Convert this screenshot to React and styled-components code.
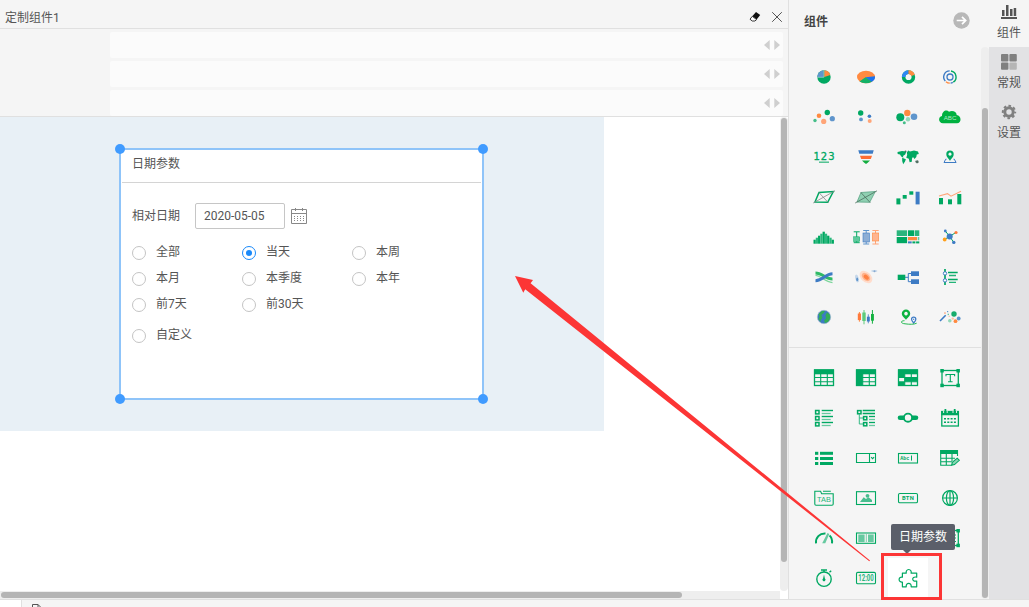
import React from "react";
import styled, { createGlobalStyle } from 'styled-components'

const GREEN = '#00a862'
const LIGHT = '#66c9a0'
const BLUE = '#3d7bc4'
const SKY = '#5f95cc'
const ORANGE = '#ff8a40'
const PEACH = '#ffa578'

const GlobalStyle = createGlobalStyle`
    * { box-sizing: border-box; }
    body {
        margin: 0;
        overflow: hidden;
        font-family: Roboto, 'Noto Sans CJK SC', sans-serif;
        font-size: 12px;
        color: #555;
    }
    svg { display: block; }
`

const Page = styled.div`
    position: relative;
    display: flex;
    flex-direction: column;
    width: 1029px;
    height: 607px;
    overflow: hidden;
    background-color: #f5f5f5;
`

const Main = styled.div`
    display: flex;
    height: 599px;
`

const Editor = styled.div`
    display: flex;
    flex-direction: column;
    width: 788px;
`

const EditorHeader = styled.div`
    display: flex;
    align-items: center;
    height: 29px;
    padding: 6px 5px 0 5px;
    border-bottom: 1px solid #e0e0e0;
`

const EditorTitle = styled.div`
    flex: 1;
    padding-top: 2px;
    line-height: 18px;
    color: #555;
`

const HeaderTools = styled.div`
    display: flex;
    align-items: center;
    gap: 10px;
`

const Shelves = styled.div`
    display: flex;
    flex-direction: column;
    gap: 3px;
    height: 88px;
    padding: 3px 5px 0 110px;
    border-bottom: 1px solid #e0e0e0;
`

const Shelf = styled.div`
    display: flex;
    align-items: center;
    justify-content: flex-end;
    height: 26px;
    padding-right: 2px;
    border-radius: 2px;
    background-color: #fbfbfb;
`

const Workspace = styled.div`
    display: flex;
    height: 474px;
    background-color: #fff;
`

const CanvasArea = styled.div`
    width: 780px;
`

const Canvas = styled.div`
    position: relative;
    width: 604px;
    height: 314px;
    background-color: #e8f0f6;
`

const VTrack = styled.div`
    width: 8px;
    height: ${p => p.$height}px;
    margin-top: ${p => p.$top || 0}px;
    padding: ${p => p.$offset}px 1px 0 1px;
    border-radius: 4px;
    background-color: #eeeeee;
`

const VThumb = styled.div`
    width: 6px;
    height: ${p => p.$height}px;
    border-radius: 3px;
    background-color: #b5b5b5;
`

const HTrack = styled.div`
    flex: 1;
    padding-left: 1px;
    background: linear-gradient(to right, #eeeeee 780px, #fff 780px);
`

const HThumb = styled.div`
    width: 681px;
    height: 6px;
    margin-top: 1px;
    border-radius: 3px;
    background-color: #b5b5b5;
`

const Widget = styled.div`
    position: absolute;
    left: 119px;
    top: 31px;
    width: 365px;
    height: 252px;
    padding: 1px;
    border: 2px solid #8fc4f9;
    background-color: #fff;
`

const WidgetTitle = styled.div`
    height: 32px;
    padding: 4px 0 0 10px;
    line-height: 18px;
    border-bottom: 1px solid #d4d4d4;
`

const WidgetBody = styled.div`
    padding: 20px 0 0 10px;
`

const Handle = styled.div`
    position: absolute;
    width: 10px;
    height: 10px;
    border-radius: 50%;
    background-color: #409bff;
    ${p => p.$right ? 'right: -6px;' : 'left: -6px;'}
    ${p => p.$bottom ? 'bottom: -6px;' : 'top: -6px;'}
`

const DateRow = styled.div`
    display: flex;
    align-items: center;
`

const DateLabel = styled.div`
    width: 63px;
    line-height: 18px;
`

const DateInput = styled.div`
    width: 90px;
    height: 26px;
    margin-right: 6px;
    padding-left: 8px;
    line-height: 24px;
    border: 1px solid #c6c6c6;
    border-radius: 2px;
`

const Options = styled.div`
    display: grid;
    grid-template-columns: repeat(3, 110px);
    grid-auto-rows: 26px;
    margin-top: 11px;
`

const Option = styled.div`
    display: flex;
    align-items: center;
    height: 26px;
    margin-top: ${p => p.$last ? 5 : 0}px;
`

const Radio = styled.div`
    display: flex;
    align-items: center;
    justify-content: center;
    width: 14px;
    height: 14px;
    margin-right: 10px;
    border: 1px solid ${p => p.$checked ? '#1989fa' : '#c4c4c4'};
    border-radius: 50%;

    &::after {
        content: '';
        width: 6px;
        height: 6px;
        border-radius: 50%;
        background-color: ${p => p.$checked ? '#1989fa' : 'transparent'};
    }
`

const OptionText = styled.div`
    padding-bottom: 2px;
    line-height: 18px;
`

const Palette = styled.div`
    width: 193px;
    border-left: 1px solid #e0e0e0;
`

const PaletteHeader = styled.div`
    display: flex;
    align-items: center;
    justify-content: space-between;
    height: 57px;
    padding: 0 11px 17px 15px;
`

const PaletteTitle = styled.div`
    font-weight: 700;
    color: #444;
`

const Icons = styled.div`
    display: grid;
    grid-template-columns: repeat(4, 42px);
    grid-auto-rows: 40px;
    padding-left: 14px;
`

const Divider = styled.div`
    height: 1px;
    margin: 10px 0;
    background-color: #e0e0e0;
`

const IconCell = styled.div`
    display: flex;
    justify-content: center;
    width: 40px;
    height: 40px;
    margin-left: 1px;
    background-color: ${p => p.$active ? '#fff' : 'transparent'};
`

const SideTabs = styled.div`
    width: 40px;
    background-color: #e2e2e4;
`

const SideTab = styled.div`
    display: flex;
    flex-direction: column;
    align-items: center;
    gap: 4px;
    height: ${p => p.$active ? 47 : 50}px;
    padding-top: ${p => p.$active ? 4 : 7}px;
    line-height: 18px;
    color: #555;
    background-color: ${p => p.$active ? '#f5f5f5' : 'transparent'};
`

const BottomBar = styled.div`
    display: flex;
    height: 8px;
    border-top: 1px solid #e0e0e0;
`

const BottomTab = styled.div`
    width: 22px;
    margin-right: 10px;
    border-right: 1px solid #e0e0e0;
    background-color: #fff;
`

const SheetIcon = styled.div`
    padding-top: 4px;
`

const Tooltip = styled.div`
    position: absolute;
    left: 891px;
    top: 524px;
    width: 64px;
    height: 26px;
    border-radius: 2px;
    line-height: 27px;
    text-align: center;
    color: #fff;
    background-color: #5b5f6a;

    &::after {
        content: '';
        position: absolute;
        left: 12px;
        top: 26px;
        border: 4px solid transparent;
        border-top-color: #5b5f6a;
        border-bottom: 0;
    }
`

const Highlight = styled.div`
    position: absolute;
    left: 881px;
    top: 553px;
    width: 61px;
    height: 47px;
    border: 3px solid #fc3535;
`

const ArrowLayer = styled.svg`
    position: absolute;
    left: 0;
    top: 0;
    pointer-events: none;
`

// every palette glyph is drawn round its own centre
const Glyph = ({ children }) => (
    <svg width="40" height="40" viewBox="-20 -20 40 40" fill="none" stroke="none">{children}</svg>
)

const Dots = ({ items }) => items.map(([x, y, r, c]) => <circle key={`${x},${y}`} cx={x} cy={y} r={r} fill={c} />)

const Boxes = ({ items, fill = GREEN }) => items.map(([x, y, w, h, c]) => (
    <rect key={`${x},${y}`} x={x} y={y} width={w} height={h} fill={c || fill} />
))

const Radar = ({ filled }) => (
    <g strokeWidth="1">
        <path d="M-9 5 L-5 -4.5 L9.3 -5.5 L3.7 5.3 Z" fill={filled ? '#8fd0b2' : 'none'} stroke={filled ? '#5aa585' : GREEN} strokeWidth={filled ? 0.8 : 1.5} />
        <path d="M-10.8 6 L11 -6.2 M-5.3 -4.7 L4.3 5.7" stroke={filled ? '#4c6e5e' : '#888'} strokeWidth="0.8" />
    </g>
)

const TableBase = ({ children }) => (
    <g>
        <rect x="-9.5" y="-8" width="19" height="15.5" stroke={GREEN} strokeWidth="1.3" />
        <rect x="-10" y="-8.7" width="20" height="5" fill={GREEN} />
        <path d="M-3.3 -4 V7.5 M3.3 -4 V7.5 M-9.5 -.5 H9.5 M-9.5 3.7 H9.5" stroke={GREEN} strokeWidth="1.1" />
        {children}
    </g>
)

const Frame = ({ children }) => (
    <g>
        <rect x="-8" y="-7.5" width="16.3" height="15" stroke={GREEN} strokeWidth="1.3" />
        <Boxes items={[[-9.7, -9, 3.5, 3.5], [6.4, -9, 3.5, 3.5], [-9.7, 5.7, 3.5, 3.5], [6.4, 5.7, 3.5, 3.5]]} />
        {children}
    </g>
)

const chartIcons = [
    <g>
        <circle r="6.7" fill={GREEN} />
        <path d="M-.4 .3 V-6.7 A6.7 6.7 0 0 0 -6.7 .3 Z" fill={SKY} />
        <path d="M.3 0 V-6.7 A6.7 6.7 0 0 1 6.3 -2 Z" fill={ORANGE} />
        <path d="M-.1 -6.7 V.3 H-6.7" stroke="#dcebe4" strokeWidth=".5" />
    </g>,
    <g>
        <ellipse rx="9" ry="6.3" fill={ORANGE} />
        <path d="M-.5 .3 L9 -.7 A9 6.3 0 0 1 5 5.2 Z" fill="#1a73f0" />
        <path d="M-.5 .2 L5.7 4.7 A9 6.3 0 0 1 -6.5 4.5 Z" fill="#13b267" />
    </g>,
    <g strokeWidth="3.6">
        <circle cx=".5" r="4.9" stroke={GREEN} />
        <path d="M-4.4 0 A4.9 4.9 0 0 1 .5 -4.9" stroke="#2d87f5" />
        <path d="M.5 -4.9 A4.9 4.9 0 0 1 5.1 -1.6" stroke={ORANGE} />
    </g>,
    <g strokeWidth="1.4">
        <path d="M1 -6 A6.1 6.1 0 0 1 3.3 5.1" stroke={GREEN} />
        <path d="M-.3 -6.1 A6.1 6.1 0 0 0 -4.7 4.1" stroke={BLUE} />
        <path d="M-4 4.7 A6.1 6.1 0 0 0 -.2 6.1" stroke={ORANGE} />
        <path d="M.6 6.1 A6.1 6.1 0 0 0 2.8 5.4" stroke={BLUE} />
        <circle r="3" stroke={BLUE} strokeWidth="1.3" />
    </g>,
    <Dots items={[[-9, 3.5, 1.7, '#45be89'], [-5, -1.3, 2.3, ORANGE], [3.3, -4.5, 2.7, GREEN], [-.3, 4.4, 2.6, PEACH], [8.3, 1.7, 2.6, SKY]]} />,
    <Dots items={[[-5.3, -4, 2.7, GREEN], [-5, 2.4, 1.9, SKY], [3.4, -.7, 1.8, BLUE], [3.7, 4, 2, PEACH]]} />,
    <Dots items={[[-7.7, .3, 4, GREEN], [-.7, -4, 3.2, ORANGE], [6, -.3, 3.3, SKY], [0, 2.3, 2.2, '#93d9b9'], [-3.7, 5.7, 1.5, '#45be89']]} />,
    <g>
        <path d="M-7 6.3 C-12 6 -12 -.5 -8 -1 C-8 -6 -3.5 -7.8 -1 -5.3 C2 -6.8 6.6 -5.8 6.7 -2 C11.5 -1.5 12 6 7 6.3 Z" fill="#00b140" />
        <text y="3.3" textAnchor="middle" fontSize="6.2" fontFamily="Liberation Sans, sans-serif" fill="#b4e7c5">ABC</text>
    </g>,
    <g>
        <text x=".5" y="2.5" textAnchor="middle" fontSize="10" letterSpacing="1" fontFamily="DejaVu Sans, sans-serif" fill={GREEN} stroke={GREEN} strokeWidth=".3">123</text>
        <path d="M-5 5.2 H5" stroke="#45be89" strokeWidth="1.4" />
    </g>,
    <g>
        <path d="M-7.7 -6.7 H7.7 L6.7 -3.3 H-6.7 Z" fill={BLUE} />
        <path d="M-6 -1.3 H6 L4.8 2 H-4.8 Z" fill="#ff6d33" />
        <path d="M-4 3.4 H4 L1.7 5.8 L0 7 L-1.7 5.8 Z" fill="#12ad3f" />
    </g>,
    <g fill={GREEN}>
        <path d="M-10.5 -5 L-6 -6 L-1.6 -5.4 L-2.8 -2.4 L-5 -1 L-4.6 .7 L-6.8 -.4 L-8 -2.6 L-10.3 -3 Z" />
        <path d="M-5.8 .8 L-2.1 2.2 L-3 4.4 L-4.8 7.2 L-5.8 4 Z" />
        <path d="M-1.2 -4.6 L.3 -6.6 L2 -5.4 L6 -6.4 L10 -5.4 L10.8 -3 L8.8 -2.4 L8.3 0 L6.5 2 L5 0 L4 1.4 L3.8 4.8 L1.6 5.2 L.8 1.8 L-1.7 .8 L-.8 -2.2 Z" />
        <path d="M7.5 3.7 L10 3.2 L10.9 5.2 L9 6.4 L7.3 5 Z" fill="#4f6d61" />
        <circle cx="-2.5" cy="-5.7" r=".9" fill="#4f6d61" />
    </g>,
    <g>
        <path d="M-3.5 2.2 H-4.3 L-6 5.5 H6.1 L4.3 2.2 H3.5" stroke={BLUE} strokeWidth="1" />
        <path d="M0 4 C-1.2 1.8 -3.7 .4 -3.7 -2.9 A3.7 3.7 0 0 1 3.7 -2.9 C3.7 .4 1.2 1.8 0 4 Z M0 -4.4 A1.6 1.6 0 1 0 .01 -4.4 Z" fill={GREEN} fillRule="evenodd" />
    </g>,
    <Radar />,
    <Radar filled />,
    <Boxes items={[[-11.6, 1.4, 4, 6], [-5.3, -2, 4, 3.7], [1.3, -5.7, 4, 3.4], [7.6, -5.3, 4, 12.7, BLUE]]} />,
    <g>
        <Boxes items={[[-11, 1, 4, 6.3], [-2, 2.3, 4, 5], [7.3, -3, 4, 10.3]]} />
        <path d="M-11 -1 L-2.5 -3.4 L1 -.8 L11 -5.8" stroke={PEACH} strokeWidth="1.1" />
    </g>,
    <g>
        {[4, 6, 8, 10, 12, 10, 8, 6, 4].map((h, i) => (
            <rect key={i} x={-10.5 + i * 2.27} y={6.7 - h} width="2.27" height={h} fill={i % 2 ? '#2cb87e' : GREEN} />
        ))}
    </g>,
    <g>
        <path d="M-12.3 -5.2 H-6.3 M-12.3 5.7 H-6.3 M-9.3 -5 V5.5" stroke={GREEN} strokeWidth="1" />
        <rect x="-12.3" y="-.2" width="6" height="4.7" fill="#5fc99d" stroke={GREEN} strokeWidth=".5" />
        <path d="M-2.8 -6.5 H3.2 M-2.8 7 H3.2 M.2 -6.5 V7" stroke={SKY} strokeWidth="1" />
        <rect x="-3" y="-4" width="6.4" height="9" fill="#8daed5" stroke={BLUE} strokeWidth=".6" />
        <path d="M6.4 -6.5 H12.7 M6.4 7 H12.7 M9.5 -6.5 V7" stroke={PEACH} strokeWidth="1" />
        <rect x="6.3" y="-4" width="6.4" height="8" fill="#ffb48e" stroke={ORANGE} strokeWidth=".6" />
    </g>,
    <Boxes items={[[-11.3, -6.7, 10.4, 5.7, '#2ab57c'], [-11.3, 0, 10.4, 6.2], [0, -6.7, 6.3, 5.7], [7, -6.7, 4.3, 5.7, '#2ab57c'], [0, 0, 9, 3.3, ORANGE], [9.7, 0, 1.6, 3.3, LIGHT], [0, 4.4, 3.7, 2, BLUE], [4.4, 4.4, 3, 2], [8.1, 4.4, 3.2, 2]]} />,
    <g>
        <path d="M-.3 -.5 L-4.7 -6 M-.3 -.5 L6 -4.7 M-.3 -.5 L-5.3 2.3 M-.3 -.5 L3.7 5.3" stroke={GREEN} strokeWidth="1" />
        <Dots items={[[-.3, -.5, 3, BLUE], [-4.7, -6, 1.4, BLUE], [6, -4.5, 1.6, '#ff7a3c'], [-5.3, 2.5, 1.9, '#ff9f1a'], [3.8, 5.4, 1.7, BLUE]]} />
    </g>,
    <g>
        <path d="M-8.5 -1.6 C-3 -1.2 1 5 8.5 5.6" stroke="#7cd69b" strokeWidth="1.1" />
        <path d="M-8.5 -4 C-2 -4 2 2.2 8.5 2" stroke="#2fba65" strokeWidth="3" />
        <path d="M-8.5 3.7 C-1 3.7 1 -3 8.5 -3.2" stroke={BLUE} strokeWidth="3" />
    </g>,
    <g>
        <ellipse rx="7.3" ry="5" transform="rotate(42)" fill="#ffdccb" />
        <ellipse rx="5" ry="3.3" transform="rotate(42)" fill="#ffb28b" />
        <ellipse rx="3" ry="1.9" cx=".3" transform="rotate(42)" fill="#ff8042" />
        <ellipse cx="-9" cy="1.5" rx="1.7" ry="4" transform="rotate(-15 -9 1.5)" fill="#c7d8ea" />
        <ellipse cx="-8.8" cy="2.3" rx="1" ry="1.9" fill={SKY} />
        <ellipse cx="8.3" cy="-6" rx="3.2" ry="1" fill="#c7d8ea" /><circle cx="8.5" cy="-5.7" r="1" fill="#88a9d0" />
    </g>,
    <g>
        <path d="M-3 .3 H.3 M3 -3.5 H.3 V4.7 H3" stroke={BLUE} strokeWidth="1" />
        <Boxes items={[[-10.3, -2.3, 7.6, 5.3], [3, -5.7, 8, 4.7, BLUE], [3, 2.3, 8, 4.7, BLUE]]} />
    </g>,
    <g>
        <path d="M-5 -8 V8" stroke={GREEN} strokeWidth="1.7" />
        <circle cx="-5" cy="-3.6" r="1.7" fill="#fff" stroke={BLUE} /><circle cx="-5" cy="3.4" r="1.7" fill="#fff" stroke={BLUE} />
        <path d="M-2 -4.5 H7.7 M-2 2.5 H7.7" stroke={GREEN} strokeWidth="1.4" />
        <path d="M-1 -1.5 H6 M-1 5.4 H6" stroke="#22b477" strokeWidth="1.4" />
    </g>,
    <g>
        <circle r="6.7" fill={BLUE} />
        <path d="M-5.5 -3 L-2 -6.2 L1 -6 L-.6 -3.5 L-2.6 -2 L-1.5 .7 L-3.2 3 L-3.4 5 L-5.7 2 L-4.6 -.3 Z M3 -4.8 L6 -2.3 L6.4 1 L4.3 4.7 L.8 6.3 L.2 3 L2.1 1.6 L1.4 -1.5 Z" fill="#34ae57" />
        <circle r="6.7" stroke="#a7bfce" strokeWidth=".6" />
    </g>,
    <g strokeWidth="1">
        <path d="M-6.6 -5 V4.7" stroke={ORANGE} /><path d="M-2 -7 V7.3" stroke="#5ecb7b" /><path d="M2.3 -2.7 V6.3" stroke={SKY} /><path d="M6.4 -7 V6.7" stroke="#12b13f" />
        <Boxes items={[[-8.2, -3.5, 3.2, 6.6, '#ff7a3c'], [-3.7, -4.5, 3.4, 8.5, '#5ecb7b'], [.9, -.3, 2.9, 4.8, BLUE], [5, -3, 2.9, 6.7, '#12b13f']]} />
    </g>,
    <g>
        <path d="M-2 3 C-3.2 .8 -6.2 -.4 -6.2 -3.4 A4.2 4.2 0 0 1 2.2 -3.4 C2.2 -.4 -.8 .8 -2 3 Z M-2 -5.2 A1.8 1.8 0 1 0 -1.99 -5.2 Z" fill="#0cb240" fillRule="evenodd" />
        <path d="M5.7 6 C4.7 4.3 3.6 3.8 3.6 2.2 A2.1 2.1 0 0 1 7.8 2.2 C7.8 3.8 6.7 4.3 5.7 6 Z" fill="#fff" stroke={BLUE} strokeWidth="1.3" /><circle cx="5.7" cy="2.2" r=".7" fill={BLUE} />
        <path d="M-3.5 3.7 C-8 3.8 -7.3 6.5 -3 6.8 C1.5 7.5 6 7.5 8.7 6.2" stroke="#0cb240" strokeWidth=".9" />
    </g>,
    <g>
        <path d="M-10 4 L-4.3 -1.7" stroke={BLUE} strokeWidth="1.6" />
        <Boxes items={[[-5.8, -4.7, 1.5, 1.5, PEACH], [-3, -6, 1.2, 1.2, SKY], [-2.4, -3.3, 1.4, 1.4, LIGHT], [-1.3, -1.2, 1, 1, PEACH]]} />
        <Dots items={[[4, -3, 2.7, '#18ac6d'], [8.7, 1.5, 1.9, SKY], [5.5, 4.2, 1.9, ORANGE], [-.2, 3.7, 1.8, '#93d9b9'], [2.8, 1.6, 1.2, '#ffc3a4']]} />
    </g>,
]

const controlIcons = [
    <TableBase />,
    <TableBase><rect x="-10" y="-4" width="6.5" height="12" fill={GREEN} /></TableBase>,
    <TableBase><Boxes items={[[-10, -4, 6.5, 3.4], [-3.3, -.4, 13, 4], [-10, 4, 6.5, 4]]} /></TableBase>,
    <Frame><path d="M-4 -1.8 V-3.5 H4.6 V-1.8 M.3 -3.8 V3.8 M-2 3.8 H2.6" stroke={GREEN} strokeWidth="1.1" /></Frame>,
    <g>
        {[-6, 0, 6].map(y => (
            <g key={y}>
                <rect x="-8.4" y={y - 1.5} width="3.4" height="3.4" stroke={GREEN} strokeWidth="1.5" />
                <path d={`M-2.3 ${y - 1.5} H9`} stroke={GREEN} strokeWidth="1.4" />
                <path d={`M-2.3 ${y + 1.5} H6.7`} stroke={LIGHT} strokeWidth="1.3" />
            </g>
        ))}
    </g>,
    <g>
        <rect x="-8.4" y="-7.4" width="3.4" height="3.2" stroke={GREEN} strokeWidth="1.5" />
        <path d="M-6.7 -4 V6 H-3 M-6.7 0 H-3" stroke="#35b985" />
        <path d="M-3.3 -7.5 H9 M-3.3 -4.5 H9" stroke={GREEN} strokeWidth="1.4" />
        {[0, 6].map(y => (
            <g key={y}>
                <rect x="-2.4" y={y - 1.4} width="3.2" height="3.2" stroke={GREEN} strokeWidth="1.5" />
                <path d={`M3 ${y - 1.5} H9`} stroke={GREEN} strokeWidth="1.3" /><path d={`M3 ${y + 1.5} H9`} stroke={LIGHT} strokeWidth="1.3" />
            </g>
        ))}
    </g>,
    <g>
        <path d="M-8 -.3 H8" stroke={GREEN} strokeWidth="4.6" strokeLinecap="round" />
        <circle cy="-.3" r="4.1" fill="#f5f5f5" stroke={GREEN} strokeWidth="1.9" />
    </g>,
    <g>
        <rect x="-8.2" y="-6.5" width="16.6" height="14.5" stroke={GREEN} strokeWidth="1.3" />
        <path d="M-8.8 -7 H9 V-2.7 H-8.8 Z M-5.5 -9 H-3.7 V-5 H-5.5 Z M3.8 -9 H5.6 V-5 H3.8 Z" fill={GREEN} />
        <path d="M-6.4 -7 V-5 M-2.8 -7 V-5 M3 -7 V-5 M6.5 -7 V-5" stroke="#f5f5f5" strokeWidth=".9" />
        <path d="M-6 .8 H6.5 M-6 4.3 H6.5" stroke={GREEN} strokeWidth="1.5" strokeDasharray="2 1.3" />
    </g>,
    <Boxes items={[[-9, -6.2, 3.3, 3], [-4, -6.2, 13, 3], [-9, -1, 3.3, 3], [-4, -1, 13, 3], [-9, 4, 3.3, 3], [-4, 4, 13, 3]]} />,
    <path d="M-9.5 -4.5 H9.5 V4.5 H-9.5 Z M3.5 -4.5 V4.5 M5.1 -.8 L6.6 .7 L8.1 -.8" stroke={GREEN} strokeWidth="1.1" />,
    <g>
        <rect x="-9.5" y="-4.5" width="19" height="9.5" stroke={GREEN} strokeWidth="1.1" />
        <text x="-7.7" y="2.4" fontSize="6.2" fontWeight="700" textLength="9" lengthAdjust="spacingAndGlyphs" fontFamily="Liberation Mono, monospace" fill={GREEN}>Abc</text>
        <path d="M3.5 -2.5 V2.6" stroke={GREEN} />
    </g>,
    <g>
        <path d="M7.5 -2 V-7.5 H-9.3 V7.3 H1.5 M-9.3 .2 H5 M-9.3 3.7 H2 M-3.7 -4 V7.3 M2 -4 V3" stroke={GREEN} strokeWidth="1.1" />
        <rect x="-9.8" y="-8" width="17.8" height="4" fill={GREEN} />
        <path d="M1.6 7.3 L2.3 4.3 L7.2 .2 L9.3 2.3 L4.5 6.6 Z" fill="#8bd5b4" stroke={GREEN} strokeWidth="1.1" />
    </g>,
    <g>
        <path d="M-9.2 6 V-6.8 H-3.4 L-2.4 -4.3 H9.2 V6 Q9.2 7.2 8 7.2 H-8 Q-9.2 7.2 -9.2 6 Z M-1 -6.8 H6.8" stroke={GREEN} strokeWidth="1.1" />
        <text y="4.2" textAnchor="middle" fontSize="7.4" fontFamily="Liberation Sans, sans-serif" fill="#28b57d">TAB</text>
    </g>,
    <g>
        <rect x="-9.5" y="-6.3" width="19" height="12.8" stroke={GREEN} strokeWidth="1.1" />
        <path d="M-6 4 L-2.3 -.7 L0 1 L2.5 -.7 L6 2 V4 Z" fill="#48be8f" /><circle cx="1.5" cy="-2.2" r="1.9" fill="#48be8f" />
    </g>,
    <g>
        <rect x="-9.5" y="-4.5" width="19" height="9.2" rx="1.3" stroke={GREEN} strokeWidth="1.1" />
        <text y="2.2" textAnchor="middle" fontSize="5.8" fontWeight="700" letterSpacing=".2" fontFamily="Roboto, sans-serif" fill={GREEN}>BTN</text>
    </g>,
    <g stroke={GREEN} strokeWidth="1.2">
        <circle r="7.4" /><ellipse rx="3.6" ry="7.4" /><path d="M-7.4 0 H7.4 M0 -7.4 V7.4" />
    </g>,
    <g>
        <path d="M-8 5.3 C-8.5 -.5 -4.5 -4.7 1.5 -4.4 M5.5 -2.6 C7.8 -.6 8.4 2 8 5.3" stroke={GREEN} strokeWidth="2" />
        <path d="M-1.8 5.3 L3.5 -5 L5.3 -4 L1.3 5.3 Z" fill={LIGHT} />
    </g>,
    <g>
        <rect x="-9.5" y="-5" width="19" height="10.3" stroke={GREEN} strokeWidth="1.1" />
        <Boxes fill={LIGHT} items={[[-7.7, -3.5, 6.3, 7.5], [2, -3.5, 5.7, 7.5]]} />
        <path d="M.3 -3.5 V4" stroke={GREEN} strokeDasharray="1 1" />
    </g>,
    <rect x="-9.5" y="-6" width="19" height="12" stroke={GREEN} strokeWidth="1" />,
    <Frame><path d="M-5 -3 H6 M-5 0 H6 M-5 3.5 H6" stroke={GREEN} strokeWidth="1" /></Frame>,
    <g>
        <circle cy="1.2" r="7.2" stroke={GREEN} strokeWidth="1.4" />
        <path d="M-3 -8 H3 M0 -8 V-6 M5.5 -5.7 L7.2 -7.3" stroke={GREEN} strokeWidth="1.4" />
        <path d="M0 -3.5 L.9 .5 A1.5 1.5 0 1 1 -.9 .5 Z" fill={GREEN} />
    </g>,
    <g>
        <rect x="-9.5" y="-5.6" width="19" height="11.4" rx="1.3" stroke={GREEN} strokeWidth="1.1" />
        <text y="3" textAnchor="middle" fontSize="8.2" fontWeight="700" textLength="15.4" lengthAdjust="spacingAndGlyphs" fontFamily="Roboto, sans-serif" fill="#28b57d">12:00</text>
    </g>,
    <path d="M-5.6 -4.9 H-1.7 C-2.2 -6.3 -1.4 -8.5 .7 -8.5 C2.8 -8.5 3.6 -6.3 3.1 -4.9 H8.7 V-.8 C5.7 -1.6 4.7 .1 4.7 1 C4.7 2.2 5.8 3.8 8.7 3 V8.8 H3.2 C3.4 6.5 2.1 5.4 .7 5.4 C-.7 5.4 -2 6.5 -1.8 8.8 H-5.6 V4.1 C-7.3 4.4 -8.9 3.3 -8.9 1.5 C-8.9 -.3 -7.3 -1.2 -5.6 -.9 Z" stroke={GREEN} strokeWidth="1.2" strokeLinejoin="round" />,
]

const options = ['全部', '当天', '本周', '本月', '本季度', '本年', '前7天', '前30天']

const RadioOption = ({ label, checked, last }) => (
    <Option $last={last}>
        <Radio $checked={checked} />
        <OptionText>{label}</OptionText>
    </Option>
)

const DateWidget = () => (
    <Widget>
        <WidgetTitle>日期参数</WidgetTitle>
        <WidgetBody>
            <DateRow>
                <DateLabel>相对日期</DateLabel>
                <DateInput>2020-05-05</DateInput>
                <svg width="16" height="16" viewBox="0 0 16 16" fill="none" stroke="#888">
                    <path d="M.5 1.5 H15.5 V15.5 H.5 Z M.5 5.5 H15.5 M4.5 0 V3 M11.5 0 V3" />
                    <path d="M3 8.5 H14 M3 10.5 H14 M3 12.5 H14" strokeDasharray="1 2" />
                </svg>
            </DateRow>
            <Options>
                {options.map(label => <RadioOption key={label} label={label} checked={label === '当天'} />)}
            </Options>
            <RadioOption label="自定义" last />
        </WidgetBody>
        <Handle />
        <Handle $right />
        <Handle $bottom />
        <Handle $right $bottom />
    </Widget>
)

const App = () => {
    return (
        <Page>
            <GlobalStyle />
            <Main>
                <Editor>
                    <EditorHeader>
                        <EditorTitle>定制组件1</EditorTitle>
                        <HeaderTools>
                            <svg width="12" height="12" viewBox="0 0 12 12">
                                <path d="M7 1 L11.2 4 L7.6 8.6 L3.3 5.3 Z" fill="#111" />
                                <path d="M3.3 5.3 L7.6 8.6 L5.9 10 H3.2 L1 8.2 Z" fill="#fff" stroke="#222" strokeWidth=".9" />
                            </svg>
                            <svg width="12" height="12" viewBox="0 0 12 12" stroke="#555" strokeWidth="1">
                                <path d="M1.2 1.2 L10.8 10.8 M10.8 1.2 L1.2 10.8" />
                            </svg>
                        </HeaderTools>
                    </EditorHeader>
                    <Shelves>
                        {[0, 1, 2].map(i => (
                            <Shelf key={i}>
                                <svg width="18" height="10" viewBox="0 0 18 10" fill="#cfcfcf">
                                    <path d="M6.7 0 V10 L1 5 Z M11.3 0 V10 L17 5 Z" />
                                </svg>
                            </Shelf>
                        ))}
                    </Shelves>
                    <Workspace>
                        <CanvasArea>
                            <Canvas>
                                <DateWidget />
                            </Canvas>
                        </CanvasArea>
                        <VTrack $height={474} $offset={1}><VThumb $height={444} /></VTrack>
                    </Workspace>
                    <HTrack><HThumb /></HTrack>
                </Editor>
                <Palette>
                    <PaletteHeader>
                        <PaletteTitle>组件</PaletteTitle>
                        <svg width="17" height="17" viewBox="0 0 17 17">
                            <circle cx="8.5" cy="8.5" r="8.2" fill="#b8b8b8" />
                            <path d="M3.7 8.5 H12.5 M9 4.8 L12.7 8.5 L9 12.2" fill="none" stroke="#fff" strokeWidth="1.7" />
                        </svg>
                    </PaletteHeader>
                    <Icons>
                        {chartIcons.map((icon, i) => <IconCell key={i}><Glyph>{icon}</Glyph></IconCell>)}
                    </Icons>
                    <Divider />
                    <Icons>
                        {controlIcons.map((icon, i) => (
                            <IconCell key={i} $active={i === controlIcons.length - 1}><Glyph>{icon}</Glyph></IconCell>
                        ))}
                    </Icons>
                </Palette>
                <VTrack $height={552} $top={47} $offset={61}><VThumb $height={490} /></VTrack>
                <SideTabs>
                    <SideTab $active>
                        <svg width="16" height="16" viewBox="0 0 16 16" fill="#555">
                            <path d="M0 13 H16 V15 H0 Z M1 6 H3.5 V12 H1 Z M5 1 H7.5 V12 H5 Z M9 5 H11.5 V12 H9 Z M12.7 4 H15.2 V12 H12.7 Z" />
                        </svg>
                        组件
                    </SideTab>
                    <SideTab>
                        <svg width="16" height="16" viewBox="0 0 16 16" fill="#808080">
                            <rect width="7.4" height="7.4" rx="1" /><rect x="8.4" width="7.4" height="7.4" rx="1" />
                            <rect y="8.4" width="7.4" height="7.4" rx="1" /><rect x="8.4" y="8.4" width="7.4" height="7.4" rx="1" fill="#b5b5b5" />
                        </svg>
                        常规
                    </SideTab>
                    <SideTab>
                        <svg width="16" height="16" viewBox="-8 -8 16 16" fill="none" stroke="#808080">
                            <circle r="4.2" strokeWidth="3" />
                            <circle r="6.2" strokeWidth="2" strokeDasharray="2.6 2.27" strokeDashoffset="1.3" />
                        </svg>
                        设置
                    </SideTab>
                </SideTabs>
            </Main>
            <BottomBar>
                <BottomTab />
                <SheetIcon>
                    <svg width="10" height="10" viewBox="0 0 10 10" fill="none" stroke="#555">
                        <path d="M.5 10 V.5 H6 L9.5 4 V10 M6 .5 V4 H9.5" />
                    </svg>
                </SheetIcon>
            </BottomBar>
            <Tooltip>日期参数</Tooltip>
            <Highlight />
            <ArrowLayer width="1029" height="607" viewBox="0 0 1029 607">
                <path d="M515 276 L533 280 L530.6 283.3 L870 560.5 L869.3 561.3 L525.2 289.3 L523.3 292.7 Z" fill="#fc3535" />
            </ArrowLayer>
        </Page>
    );
}

export default App;
